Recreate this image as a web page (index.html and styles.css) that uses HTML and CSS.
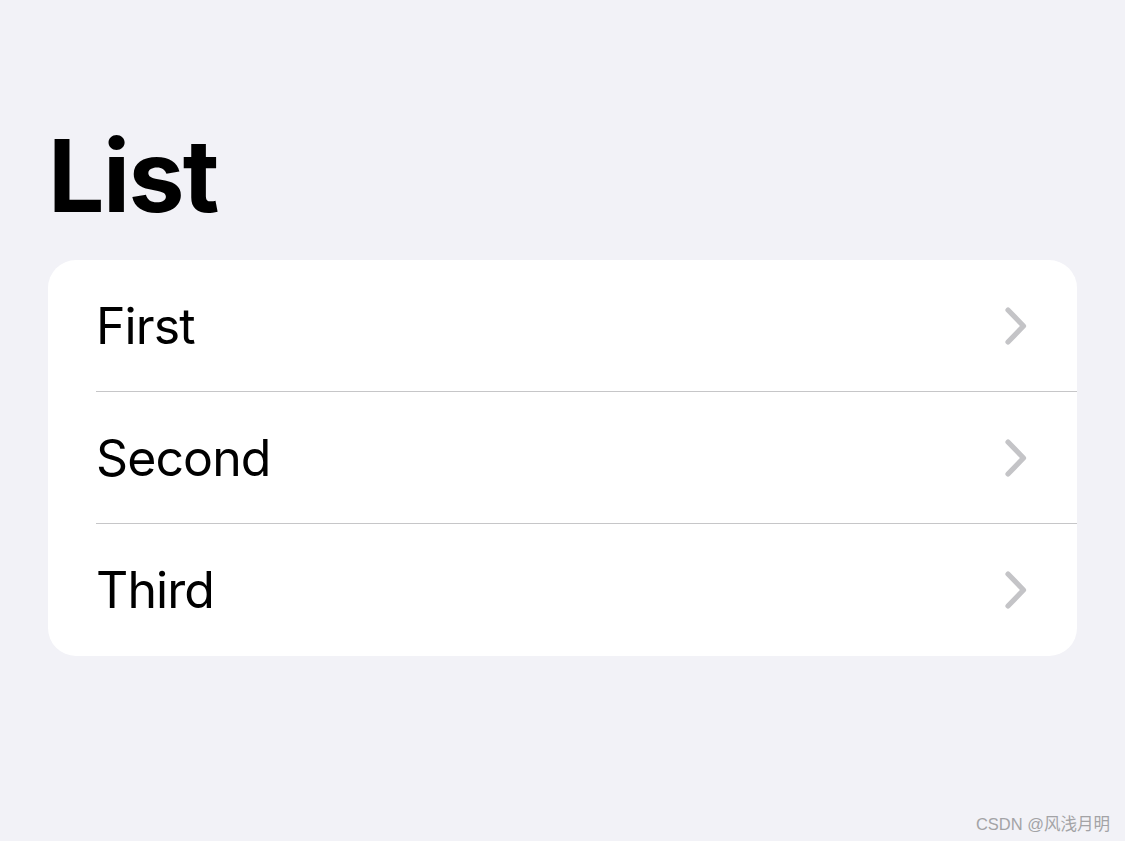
FILE: index.html
```html
<!DOCTYPE html>
<html lang="en">
<head>
  <meta charset="UTF-8" />
  <title>List</title>
  <link rel="stylesheet" href="styles.css">
</head>
<body>

  <h1 class="title">List</h1>

  <div class="list">
    <div class="row">
      <span class="label">First</span>
      <svg class="chevron" width="24" height="40" viewBox="0 0 24 40">
        <path d="M4 4 L19.5 20 L4 36" />
      </svg>
    </div>
    <div class="row">
      <span class="label">Second</span>
      <svg class="chevron" width="24" height="40" viewBox="0 0 24 40">
        <path d="M4 4 L19.5 20 L4 36" />
      </svg>
    </div>
    <div class="row">
      <span class="label">Third</span>
      <svg class="chevron" width="24" height="40" viewBox="0 0 24 40">
        <path d="M4 4 L19.5 20 L4 36" />
      </svg>
    </div>
  </div>

  <div class="watermark">CSDN @风浅月明</div>

</body>
</html>
```

FILE: styles.css
```css
body {
  margin: 0;
  padding: 116px 48px 0 48px;
  background-color: #f2f2f7;
  color: #000000;
  font-family: Inter, "Liberation Sans", sans-serif;
  height: 841px;
  box-sizing: border-box;
  position: relative;
}

.title {
  margin: 0 0 24px 0;
  font-size: 100px;
  line-height: 120px;
  font-weight: 700;
  letter-spacing: -1.6px;
}

.list {
  background-color: #ffffff;
  border-radius: 28px;
  overflow: hidden;
}

.row {
  display: flex;
  align-items: center;
  justify-content: space-between;
  height: 132px;
  margin-left: 48px;
  padding-right: 49px;
  box-sizing: border-box;
  border-bottom: 1px solid #c6c6c8;
}

.row:last-child {
  border-bottom: none;
}

.label {
  font-size: 50px;
  font-weight: 400;
  letter-spacing: -0.9px;
}

.chevron {
  display: block;
}

.chevron path {
  fill: none;
  stroke: #c4c4c7;
  stroke-width: 5.2;
  stroke-linecap: round;
  stroke-linejoin: round;
}

.watermark {
  position: absolute;
  right: 15px;
  bottom: 6px;
  font-family: "Liberation Sans", "Noto Sans CJK SC", sans-serif;
  font-size: 16.5px;
  color: #a3a3a6;
}
```
